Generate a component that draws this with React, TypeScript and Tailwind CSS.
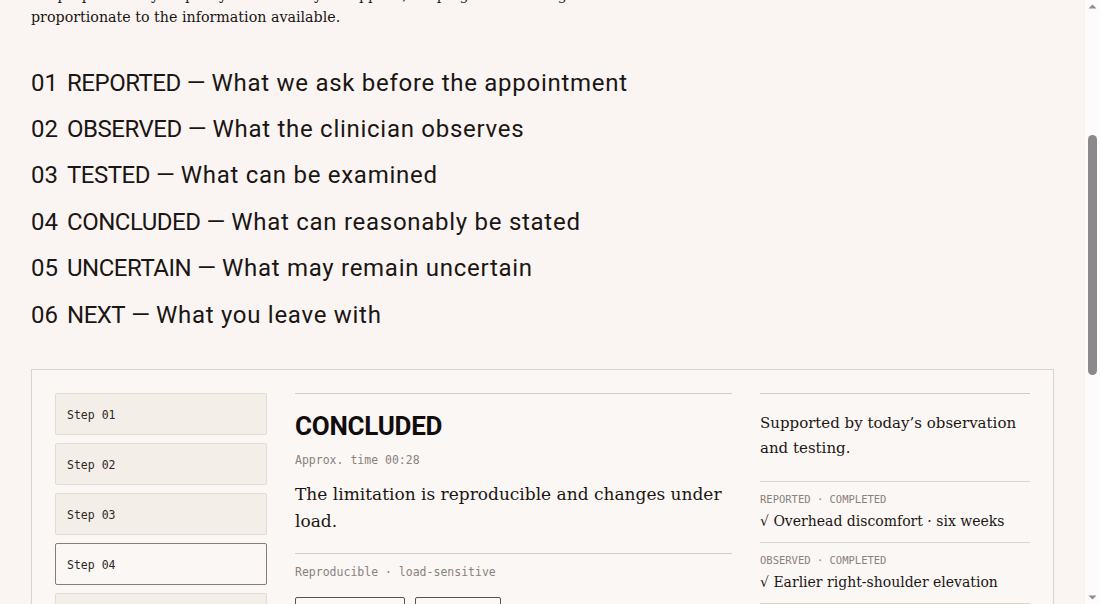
import React, { useLayoutEffect, useRef } from "react";

const sans = "font-['Roboto','Inter',sans-serif]";
const serif = "font-['DejaVu_Serif','Liberation_Serif',serif]";
const mono = "font-['DejaVu_Sans_Mono','Liberation_Mono',monospace]";

const phases = [
  { n: "01", label: "REPORTED", text: "What we ask before the appointment" },
  { n: "02", label: "OBSERVED", text: "What the clinician observes" },
  { n: "03", label: "TESTED", text: "What can be examined" },
  { n: "04", label: "CONCLUDED", text: "What can reasonably be stated" },
  { n: "05", label: "UNCERTAIN", text: "What may remain uncertain" },
  { n: "06", label: "NEXT", text: "What you leave with" },
];

const trail = [
  { tag: "REPORTED · COMPLETED", line: "Overhead discomfort · six weeks" },
  { tag: "OBSERVED · COMPLETED", line: "Earlier right-shoulder elevation" },
  { tag: "TESTED · COMPLETED", line: "Painful arc between 70° and 110°" },
  { tag: "CONCLUDED · CURRENT", line: "Reproducible, load-sensitive limitation" },
];

function ScrollRail() {
  return (
    <div className="flex h-[604px] w-[15px] shrink-0 flex-col items-center bg-[#fdfbfc]">
      <svg width="15" height="15" viewBox="0 0 15 15" className="shrink-0">
        <path d="M3.5 8.5 L7.5 4.5 L11.5 8.5 Z" fill="#8f8c8f" />
      </svg>
      <div className="mt-[120px] h-[240px] w-[9px] rounded-full bg-[#8c898c]" />
      <div className="flex-1" />
      <svg width="15" height="15" viewBox="0 0 15 15" className="shrink-0">
        <path d="M3.5 6.5 L7.5 10.5 L11.5 6.5 Z" fill="#8f8c8f" />
      </svg>
    </div>
  );
}

export default function App() {
  const scroller = useRef<HTMLDivElement>(null);
  const list = useRef<HTMLOListElement>(null);

  useLayoutEffect(() => {
    const place = () => {
      if (scroller.current && list.current) {
        scroller.current.scrollTop = list.current.offsetTop - 60;
      }
    };
    place();
    document.fonts?.ready.then(place);
  }, []);

  return (
    <div className="flex h-[604px] w-[1100px] bg-[#faf5f2] text-[#1b1614]">
      <div ref={scroller} className="relative h-[604px] w-[1085px] overflow-hidden">
        <main className="px-[31px] pb-[120px] pt-[64px]">
          <p className={`${mono} text-[11.5px] uppercase tracking-wide text-[#8a817c]`}>
            Section 2 · The appointment
          </p>
          <h2 className={`${sans} mt-4 text-[44px] font-bold leading-[1.1] tracking-tight`}>
            How a visit is structured
          </h2>
          <p className={`${serif} mt-6 max-w-[640px] text-[14.25px] leading-[22px]`}>
            Every appointment moves through the same six phases, so that you always know
            where you are and what is still to come.
          </p>
          <p className={`${serif} mt-6 max-w-[680px] text-[14.25px] leading-[22px]`}>
            Each phase is kept apart, so that what you report and what is seen stay distinct.
            <br />
            We prepare every step so you know why it happens, keeping its reasoning
            <br />
            proportionate to the information available.
          </p>

          <ol ref={list} className={`${sans} mt-[32px] text-[24px] leading-[46.4px]`}>
            {phases.map((p) => (
              <li key={p.n} className="flex whitespace-nowrap">
                <span className="w-[36px]">{p.n}</span>
                <span className="tracking-[-0.02em]">{p.label}</span>
                <span className="pl-[6px] pr-[6px]">—</span>
                <span className="tracking-[0.03em]">{p.text}</span>
              </li>
            ))}
          </ol>

          <section className="mt-[31px] w-[1023px] border border-[#ddd3cc] bg-[#fbf7f4] p-[23px]">
            <div className="grid grid-cols-[212px_1fr_270px] gap-x-[28px]">
              <div className="flex flex-col gap-[8px]">
                {["01", "02", "03", "04", "05", "06"].map((s) => (
                  <button
                    key={s}
                    className={`${mono} flex h-[42px] items-center rounded-[2px] border px-[11px] pt-[3px] text-left text-[11.5px] text-[#2f2825] ${
                      s === "04"
                        ? "border-[#8c7b74] bg-[#fbf7f4]"
                        : "border-[#e3dad3] bg-[#f4eee9]"
                    }`}
                  >
                    Step {s}
                  </button>
                ))}
              </div>

              <div className="border-t border-[#d6ccc6] pt-[16px]">
                <h3 className={`${sans} text-[26px] font-bold leading-[32px] tracking-[-0.01em] text-[#110d0c]`}>
                  CONCLUDED
                </h3>
                <p className={`${mono} mt-[10px] text-[11.5px] text-[#8a817c]`}>
                  Approx. time 00:28
                </p>
                <p className={`${serif} mt-[12px] text-[17px] leading-[27px]`}>
                  The limitation is reproducible and changes under load.
                </p>
                <div className="mt-[18px] border-t border-[#d6ccc6] pt-[10px]">
                  <p className={`${mono} text-[11.5px] text-[#8a817c]`}>
                    Reproducible · load-sensitive
                  </p>
                </div>
                <div className="mt-[15px] flex gap-[10px]">
                  <button
                    className={`${mono} h-[32px] w-[110px] rounded-[2px] border border-[#5b514d] text-[11px]`}
                  >
                    ← Previous
                  </button>
                  <button
                    className={`${mono} h-[32px] w-[86px] rounded-[2px] border border-[#5b514d] text-[11px]`}
                  >
                    Next →
                  </button>
                </div>
              </div>

              <div className="border-t border-[#d6ccc6]">
                <p className={`${serif} pb-[20px] pt-[17px] text-[15px] leading-[25px]`}>
                  Supported by today’s observation and testing.
                </p>
                {trail.map((t) => (
                  <div key={t.tag} className="border-t border-[#ddd3cc] pb-[10px] pt-[10px]">
                    <p className={`${mono} text-[10.5px] leading-[14px] text-[#8a817c]`}>
                      {t.tag}
                    </p>
                    <p className={`${serif} mt-[4px] text-[14px] leading-[22px]`}>√ {t.line}</p>
                  </div>
                ))}
              </div>
            </div>
          </section>

          <footer className="mt-[80px] border-t border-[#ddd3cc] pt-[24px]">
            <p className={`${serif} max-w-[640px] text-[14.25px] leading-[22px]`}>
              Nothing in this outline replaces the conversation with your clinician. It is
              meant to show how information is gathered and weighed.
            </p>
            <p className={`${mono} mt-[16px] text-[11px] text-[#8a817c]`}>
              Last reviewed · March
            </p>
          </footer>
        </main>
      </div>
      <ScrollRail />
    </div>
  );
}
